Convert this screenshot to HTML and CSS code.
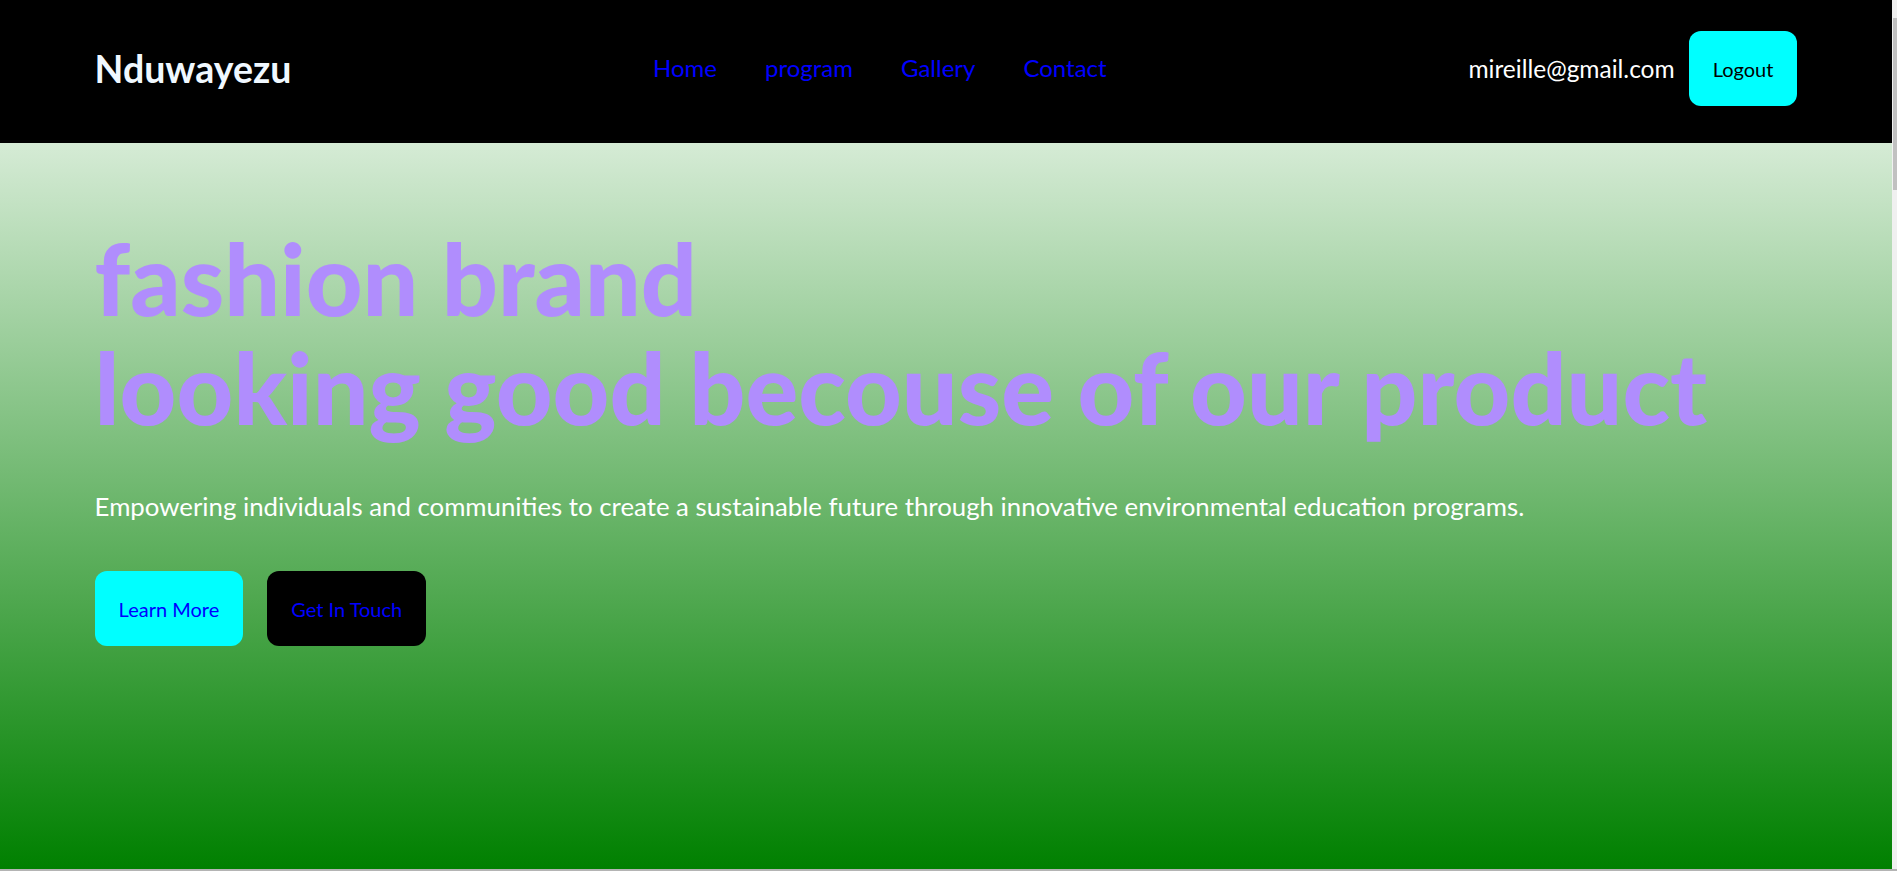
FILE: index.html
```html
<!DOCTYPE html>
<html lang="en">
<head>
  <meta charset="utf-8">
  <title>Nduwayezu</title>
  <link rel="stylesheet" href="styles.css">
</head>
<body>
  <div class="page">
    <header class="site-header">
      <div class="logo">Nduwayezu</div>
      <nav class="main-nav">
        <a href="#" class="nav-link">Home</a>
        <a href="#" class="nav-link">program</a>
        <a href="#" class="nav-link">Gallery</a>
        <a href="#" class="nav-link">Contact</a>
      </nav>
      <div class="user-area">
        <span class="user-email">mireille@gmail.com</span>
        <button class="btn btn-logout">Logout</button>
      </div>
    </header>

    <main class="hero">
      <h1 class="hero-title">fashion brand<br>looking good becouse of our product</h1>
      <p class="hero-text">Empowering individuals and communities to create a sustainable future through innovative environmental education programs.</p>
      <div class="hero-actions">
        <a href="#" class="btn btn-primary">Learn More</a>
        <a href="#" class="btn btn-dark">Get In Touch</a>
      </div>
    </main>
  </div>
</body>
</html>
```
FILE: styles.css
```css
* {
  box-sizing: border-box;
}

html,
body {
  margin: 0;
  height: 100%;
  overflow: hidden;
}

body {
  font-family: "Lato", "Open Sans", sans-serif;
  color: #ffffff;
  background: #f0f0f0;
}

/* page frame: thin scrollbar strip on the right, thin bar at the bottom */
.page {
  height: 100vh;
  display: flex;
  flex-direction: column;
  padding-right: 5px;
  border-bottom: 2px solid #b4b4b4;
  background:
    linear-gradient(#c1c1c1, #c1c1c1) right 0 top 18px / 4px 172px no-repeat,
    #f0f0f0;
}

.site-header {
  flex: none;
  height: 143px;
  padding: 0 5% 6px;
  background: #000000;
  display: flex;
  align-items: center;
  justify-content: space-between;
}

.logo {
  font-size: 37.5px;
  font-weight: 700;
  color: #f0f8ff;
  line-height: 1.2;
}

.main-nav {
  display: flex;
  gap: 48px;
}

.nav-link {
  font-size: 24px;
  line-height: 1.2;
  color: #0000ff;
  text-decoration: none;
}

.user-area {
  display: flex;
  align-items: center;
  gap: 14px;
}

.user-email {
  font-size: 24.5px;
  line-height: 1.2;
  color: #ffffff;
}

.btn {
  display: inline-block;
  font-family: "Lato", "Open Sans", sans-serif;
  font-size: 20px;
  line-height: 27px;
  padding: 25px 24px 23px;
  border: none;
  border-radius: 12px;
  text-decoration: none;
  cursor: pointer;
}

.btn-logout {
  background: #00ffff;
  color: #000000;
}

.hero {
  flex: 1;
  padding: 81px 5% 0;
  background: linear-gradient(to bottom, #d5ebd5, #008000);
}

.hero-title {
  margin: 0;
  font-size: 98.5px;
  font-weight: 900;
  line-height: 109px;
  color: #b08dfd;
}

.hero-text {
  margin: 45px 0 0;
  font-size: 25.8px;
  line-height: 1.5;
  color: #ffffff;
}

.hero-actions {
  display: flex;
  gap: 24px;
  margin-top: 45px;
}

.btn-primary {
  background: #00ffff;
  color: #0000ff;
}

.btn-dark {
  background: #000000;
  color: #0000ff;
}
```
